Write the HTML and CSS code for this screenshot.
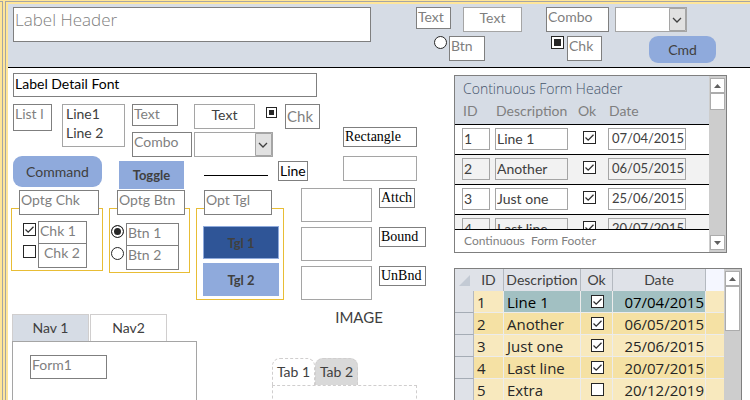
FILE: index.html
```html
<!DOCTYPE html>
<html lang="en">
<head>
	<meta charset="utf-8">
	<title>Form theme</title>
	<link rel="stylesheet" href="styles.css">
</head>
<body>
	<div class="pane"></div>
	<div class="window">
		<header class="head">
			<h1 class="box title">Label Header</h1>
			<div class="head-controls">
				<div class="row">
					<label class="box short w35" for="h-text">Text</label>
					<input class="field h-text" id="h-text" type="text" value="Text">
					<label class="box h-combo" for="h-combo">Combo</label>
					<select class="field combo h-select" id="h-combo"><option></option></select>
				</div>
				<div class="row second">
					<input class="radio" type="radio" id="h-btn">
					<label class="box w36" for="h-btn">Btn</label>
					<input class="check partial h-check" type="checkbox" id="h-chk">
					<label class="box w35" for="h-chk">Chk</label>
					<button class="btn h-cmd">Cmd</button>
				</div>
			</div>
		</header>
		<main class="main">
			<section class="detail">
				<h2 class="box detail-title">Label Detail Font</h2>
				<div class="row">
					<div class="left">
						<div class="row top">
							<label class="box list-label" for="d-list">List l</label>
							<select class="field list" id="d-list" size="2"><option>Line1</option><option>Line 2</option></select>
							<div class="pairs">
								<div class="row pair">
									<label class="box short w46" for="d-text">Text</label>
									<input class="field d-text" id="d-text" type="text" value="Text">
									<input class="check small partial d-check" type="checkbox" id="d-chk">
									<label class="box big w35" for="d-chk">Chk</label>
								</div>
								<div class="row pair2">
									<label class="box w60" for="d-combo">Combo</label>
									<select class="field combo d-select" id="d-combo"><option></option></select>
								</div>
							</div>
						</div>
						<div class="row commands">
							<button class="btn command">Command</button>
							<button class="toggle main-toggle">Toggle</button>
							<hr class="line">
							<span class="box line-label">Line</span>
						</div>
					</div>
					<div class="rect">
						<span class="box serif">Rectangle</span>
						<div class="frame"></div>
					</div>
				</div>
				<div class="row groups">
					<fieldset class="group g-chk">
						<legend class="box w80">Optg Chk</legend>
						<div class="row opt"><input class="check" type="checkbox" id="c1" checked><label class="box w49" for="c1">Chk 1</label></div>
						<div class="row opt"><input class="check" type="checkbox" id="c2"><label class="box w49 indent" for="c2">Chk 2</label></div>
					</fieldset>
					<fieldset class="group g-btn">
						<legend class="box w68">Optg Btn</legend>
						<div class="row opt"><input class="radio" type="radio" name="btn" id="b1" checked><label class="box w53" for="b1">Btn 1</label></div>
						<div class="row opt"><input class="radio" type="radio" name="btn" id="b2"><label class="box w53" for="b2">Btn 2</label></div>
					</fieldset>
					<fieldset class="group g-tgl">
						<legend class="box w68">Opt Tgl</legend>
						<button class="toggle on">Tgl 1</button>
						<button class="toggle">Tgl 2</button>
					</fieldset>
					<div class="frames">
						<div class="row"><div class="frame tall"></div><span class="box serif w36">Attch</span></div>
						<div class="row"><div class="frame tall"></div><span class="box serif w47">Bound</span></div>
						<div class="row"><div class="frame tall"></div><span class="box serif w47">UnBnd</span></div>
					</div>
				</div>
				<div class="row bottom">
					<div class="nav">
						<nav class="row nav-tabs">
							<a href="#nav1">Nav 1</a>
							<a href="#nav2" class="active">Nav2</a>
						</nav>
						<div class="nav-page"><span class="box form1">Form1</span></div>
					</div>
					<div class="tabs">
						<p class="image">IMAGE</p>
						<div class="row">
							<button class="tab active">Tab 1</button>
							<button class="tab">Tab 2</button>
						</div>
						<div class="tab-page"></div>
					</div>
				</div>
			</section>
			<section class="side">
				<div class="subform">
					<div class="sub-body">
						<div class="sub-clip">
							<h3>Continuous Form Header</h3>
							<table class="sub-table">
								<thead><tr><th class="s-id">ID</th><th class="s-desc">Description</th><th class="s-ok">Ok</th><th>Date</th></tr></thead>
								<tbody>
									<tr><td><input class="field" aria-label="ID" value="1"></td><td><input class="field" aria-label="Description" value="Line 1"></td><td class="s-check"><input class="check" type="checkbox" aria-label="Ok" checked></td><td><input class="field date" aria-label="Date" value="07/04/2015"></td></tr>
									<tr><td><input class="field" aria-label="ID" value="2"></td><td><input class="field" aria-label="Description" value="Another"></td><td class="s-check"><input class="check" type="checkbox" aria-label="Ok" checked></td><td><input class="field date" aria-label="Date" value="06/05/2015"></td></tr>
									<tr><td><input class="field" aria-label="ID" value="3"></td><td><input class="field" aria-label="Description" value="Just one"></td><td class="s-check"><input class="check" type="checkbox" aria-label="Ok" checked></td><td><input class="field date" aria-label="Date" value="25/06/2015"></td></tr>
									<tr><td><input class="field" aria-label="ID" value="4"></td><td><input class="field" aria-label="Description" value="Last line"></td><td class="s-check"><input class="check" type="checkbox" aria-label="Ok" checked></td><td><input class="field date" aria-label="Date" value="20/07/2015"></td></tr>
								</tbody>
							</table>
						</div>
						<p class="sub-foot">Continuous &nbsp;Form Footer</p>
					</div>
					<div class="scroll">
						<button class="arrow" aria-label="Up"><svg width="7" height="4"><path d="M0 4L3.5 0L7 4Z"/></svg></button>
						<div class="thumb"></div>
						<button class="arrow down" aria-label="Down"><svg width="7" height="4"><path d="M0 0L3.5 4L7 0Z"/></svg></button>
					</div>
				</div>
				<div class="sheet">
					<table class="sheet-table">
						<thead><tr><th class="t-sel"><svg width="11" height="11"><path d="M11 0V11H0Z"/></svg></th><th class="t-id">ID</th><th class="t-desc">Description</th><th class="t-ok">Ok</th><th class="t-date">Date</th><th class="t-rest"></th></tr></thead>
						<tbody>
							<tr class="sel"><th></th><td>1</td><td>Line 1</td><td><input class="check" type="checkbox" aria-label="Ok" checked></td><td>07/04/2015</td><td></td></tr>
							<tr><th></th><td>2</td><td>Another</td><td><input class="check" type="checkbox" aria-label="Ok" checked></td><td>06/05/2015</td><td></td></tr>
							<tr><th></th><td>3</td><td>Just one</td><td><input class="check" type="checkbox" aria-label="Ok" checked></td><td>25/06/2015</td><td></td></tr>
							<tr><th></th><td>4</td><td>Last line</td><td><input class="check" type="checkbox" aria-label="Ok" checked></td><td>20/07/2015</td><td></td></tr>
							<tr><th></th><td>5</td><td>Extra</td><td><input class="check" type="checkbox" aria-label="Ok"></td><td>20/12/2019</td><td></td></tr>
						</tbody>
					</table>
					<div class="scroll">
						<button class="arrow" aria-label="Up"><svg width="7" height="4"><path d="M0 4L3.5 0L7 4Z"/></svg></button>
						<div class="thumb long"></div>
					</div>
				</div>
			</section>
		</main>
	</div>
</body>
</html>
```
FILE: styles.css
```css
*{
	margin: 0;
	padding: 0;
	box-sizing: border-box;
}
body{
	display: flex;
	height: 100vh;
	overflow: hidden;
	background: #ffe699;
	font-family: Lato, "Open Sans", sans-serif;
	font-size: 14px;
	line-height: 18px;
	color: #404040;
}
input,select,button{
	font: inherit;
	color: inherit;
	appearance: none;
	border-radius: 0;
}
.pane{
	width: 3px;
	margin-top: 1px;
	border-top: 1px solid #a5a5a5;
	border-right: 1px solid #a5a5a5;
}
.window{
	display: flex;
	flex-direction: column;
	flex: 1;
	margin: 1px 0 0 2px;
	padding: 2px 0 0 2px;
	border-top: 1px solid #a5a5a5;
	border-left: 1px solid #a5a5a5;
}
.row{
	display: flex;
	align-items: flex-start;
}

/* boxes and fields */
.box{
	flex: none;
	display: block;
	height: 25px;
	padding: 0 1px;
	border: 1px solid #7f7f7f;
	background: #fff;
	color: #7f7f7f;
	font-weight: normal;
	white-space: nowrap;
	overflow: hidden;
}
.box.short{
	height: 22px;
}
.w35{ width: 35px; }
.w36{ width: 36px; }
.w46{ width: 46px; }
.w47{ width: 47px; }
.w49{ width: 49px; }
.w53{ width: 53px; }
.w60{ width: 60px; }
.w68{ width: 68px; }
.w80{ width: 80px; }
.box.big{
	font-size: 15px;
	line-height: 22px;
}
.box.indent{
	padding-left: 5px;
}
.box.serif{
	height: 20px;
	font-family: "Liberation Serif", serif;
	font-size: 14px;
	color: #000;
}
.field{
	height: 25px;
	border: 1px solid #a5a5a5;
	background: #fff;
	outline: none;
}
.combo{
	background: #fff url("data:image/svg+xml,%3Csvg xmlns='http://www.w3.org/2000/svg' width='17' height='23'%3E%3Cpath d='M.5 .5h16v22H.5z' fill='%23e1e1e1' stroke='%23a5a5a5'/%3E%3Cpath d='M4 10l4 4 4-4' fill='none' stroke='%23404040' stroke-width='1.3'/%3E%3C/svg%3E") right center no-repeat;
}
.check,.radio{
	flex: none;
	display: block;
	width: 13px;
	height: 13px;
	border: 1px solid #262626;
	background: #fff;
}
.check:checked{
	background: #fff url("data:image/svg+xml,%3Csvg xmlns='http://www.w3.org/2000/svg' width='11' height='11'%3E%3Cpath d='M1.5 5.5L4.2 8.2L9.5 2.8' fill='none' stroke='%23303030' stroke-width='1.3'/%3E%3C/svg%3E") center no-repeat;
}
.radio{
	border-radius: 50%;
}
.radio:checked,.partial{
	background: #262626;
	box-shadow: inset 0 0 0 2px #fff;
}
.small{
	width: 11px;
	height: 11px;
}
.btn{
	border: 0;
	border-radius: 9px;
	background: #8faadc;
}
.toggle{
	border: 1px solid #8faadc;
	background: #8faadc;
	font-size: 13px;
	font-weight: bold;
}
.toggle.on{
	background: #2f5597;
}

/* header */
.head{
	display: flex;
	flex: none;
	height: 64px;
	padding: 3px 5px;
	border-bottom: 1px solid #000;
	background: #d6dce5;
}
.title{
	flex: 0 1 358px;
	height: 35px;
	padding: 1px;
	font-family: "Open Sans", sans-serif;
	font-size: 17px;
	font-weight: 300;
	line-height: 22px;
}
.head-controls{
	margin-left: 45px;
}
.h-text{
	width: 59px;
	margin: 0 24px 0 12px;
	padding-bottom: 4px;
	text-align: center;
	color: #7f7f7f;
}
.h-combo{
	width: 63px;
}
.h-select{
	width: 72px;
	margin-left: 6px;
}
.second{
	margin-top: 4px;
	padding-left: 18px;
}
.second .radio{
	margin-right: 2px;
}
.h-check{
	margin: 0 3px 0 66px;
}
.h-cmd{
	width: 67px;
	height: 27px;
	margin-left: 47px;
}

/* detail */
.main{
	display: flex;
	flex: 1;
	min-height: 0;
	overflow: hidden;
	background: #fff;
}
.detail{
	flex: none;
	width: 446px;
	padding: 5px 0 0 3px;
}
.detail-title{
	width: 304px;
	height: 24px;
	margin: 0 0 7px 2px;
	font-size: 14px;
	line-height: 20px;
	color: #000;
}
.left{
	width: 332px;
	padding-left: 2px;
}
.top{
	height: 52px;
}
.list-label{
	width: 39px;
	height: 27px;
}
.list{
	width: 63px;
	height: 43px;
	margin: 0 7px 0 10px;
	overflow: hidden;
}
.list option{
	min-height: 19px;
	padding: 0 3px;
	line-height: 19px;
}
.pair{
	margin-bottom: 3px;
}
.d-text{
	width: 61px;
	margin: 0 11px 0 16px;
	padding-bottom: 4px;
	text-align: center;
}
.d-check{
	margin: 3px 8px 0 0;
}
.d-select{
	width: 79px;
	margin-left: 2px;
}
.command{
	width: 89px;
	height: 31px;
}
.main-toggle{
	width: 65px;
	height: 28px;
	margin: 5px 20px 0 17px;
}
.line{
	width: 64px;
	margin-top: 19px;
	border: 0;
	border-top: 1px solid #000;
}
.line-label{
	height: 20px;
	margin: 5px 0 0 10px;
	color: #000;
}
.commands{
	height: 32px;
}
.rect{
	width: 74px;
	padding-top: 23px;
}
.frame{
	height: 25px;
	margin-top: 9px;
	border: 1px solid #a5a5a5;
}
.groups{
	height: 117px;
}
.group{
	min-width: 0;
	margin-right: 6px;
	border: 1px solid #e8bd35;
}
.group legend{
	float: left;
	margin: -19px 0 0 7px;
}
.opt{
	clear: both;
	padding-left: 11px;
	margin-top: -3px;
}
.opt .box{
	margin-left: 2px;
}
.opt input{
	margin-top: 2px;
}
.g-chk,.g-btn,.g-tgl{
	margin-top: 20px;
}
.g-chk{
	width: 92px;
	height: 63px;
}
.g-chk legend + .opt{
	margin-top: 0;
	padding-top: 6px;
}
.g-btn legend + .opt{
	margin-top: 0;
	padding-top: 8px;
}
.g-btn{
	width: 81px;
	height: 65px;
}
.g-btn .opt{
	padding-left: 1px;
}
.g-tgl{
	width: 88px;
	height: 92px;
	margin-right: 17px;
}
.g-tgl .toggle{
	clear: both;
	display: block;
	width: 76px;
	height: 33px;
	margin: 0 0 4px 6px;
}
.g-tgl legend{
	margin-bottom: 11px;
}
.frames .row{
	height: 39px;
}
.tall{
	width: 71px;
	height: 34px;
	margin: 0 7px 0 0;
}

/* navigation and tabs */
.nav{
	width: 185px;
	margin: 9px 75px 0 1px;
}
.nav-tabs{
	gap: 1px;
}
.nav-tabs a{
	width: 77px;
	height: 27px;
	border: 1px solid #d0cece;
	border-bottom: 0;
	background: #d6dce5;
	color: inherit;
	line-height: 26px;
	text-align: center;
	text-decoration: none;
}
.nav-tabs .active{
	background: #fff;
}
.nav-page{
	height: 80px;
	padding: 13px 17px;
	border: 1px solid #a5a5a5;
}
.form1{
	width: 77px;
	height: 24px;
}
.tabs{
	width: 145px;
}
.image{
	height: 53px;
	padding: 2px 0 0 29px;
	text-align: center;
	font-size: 15px;
	line-height: 20px;
}
.tab{
	width: 43px;
	height: 27px;
	border: 1px dashed #d0cece;
	border-bottom: 0;
	border-radius: 8px 8px 0 0;
	background: #d9d9d9;
}
.tab.active{
	background: #fff;
}
.tab-page{
	height: 40px;
	border: 1px dashed #d0cece;
}

/* continuous form */
.side{
	flex: 1;
	padding: 7px 8px 0 0;
}
.subform{
	display: flex;
	height: 178px;
	margin-right: 15px;
	border: 1px solid #7f7f7f;
}
.sub-body{
	flex: 1;
}
.sub-clip{
	height: 154px;
	overflow: hidden;
	border-bottom: 1px solid #000;
}
.subform h3{
	height: 23px;
	padding: 3px 8px 0;
	background: #d6dce5;
	color: #44546a;
	font-family: "Open Sans", sans-serif;
	font-size: 14px;
	font-weight: 300;
	line-height: 20px;
}
table{
	width: 100%;
	table-layout: fixed;
	border-collapse: separate;
	border-spacing: 0;
}
.sub-table th{
	height: 26px;
	padding: 0 0 2px 1px;
	border-bottom: 1px solid #000;
	background: #d6dce5;
	color: #7f7f7f;
	font-weight: normal;
	text-align: left;
}
.sub-table .s-id{
	width: 40px;
	padding-left: 8px;
}
.s-desc{ width: 82px; }
.s-ok{ width: 31px; }
.sub-table td{
	height: 30px;
	padding: 0 9px 2px 0;
	border-bottom: 1px solid #000;
}
.sub-table td:first-child{
	padding: 0 5px 2px 7px;
}
.sub-table tr:nth-child(even) td,.sub-table tr:nth-child(even) .field{
	background: #f2f2f2;
}
.sub-table td.s-check{
	padding: 0 0 5px 6px;
}
.sub-table .field{
	display: block;
	width: 100%;
	height: 22px;
	padding: 0 1px 1px;
}
.sub-table .date{
	width: 78px;
	text-align: right;
	font-size: 13px;
}
.sub-foot{
	padding: 2px 9px;
	color: #7f7f7f;
	font-size: 12px;
}
.scroll{
	display: flex;
	flex-direction: column;
	flex: none;
	width: 17px;
	padding: 2px 1px;
	background: #cdcdcd;
}
.arrow,.thumb{
	height: 15px;
	border: 1px solid #acacac;
	background: #fff;
}
.arrow{
	display: flex;
	align-items: center;
	justify-content: center;
	fill: #606060;
}
.thumb{
	height: 17px;
}
.long{
	height: 45px;
}
.down{
	margin-top: auto;
}

/* datasheet */
.sheet{
	display: flex;
	margin-top: 15px;
	border: 1px solid #7f7f7f;
	font-family: "Open Sans", sans-serif;
	font-size: 15px;
	color: #262626;
}
.sheet-table th{
	height: 22px;
	border-right: 1px solid #b4b9c0;
	background: #dfe2e8;
	color: #404040;
	font-family: Lato, sans-serif;
	font-size: 14px;
	font-weight: normal;
}
.sheet-table thead .t-sel{
	width: 19px;
	border-right: 0;
	fill: #c3cad4;
}
.t-id{ width: 30px; }
.t-desc{ width: 77px; }
.t-ok{ width: 32px; }
.t-date{ width: 93px; }
.sheet-table svg{
	display: block;
	margin-left: 4px;
}
.sheet-table .t-rest{
	border: 0;
	background: #f5f7ff;
}
.sheet-table tbody th{
	border-bottom: 1px solid #a5acb5;
}
.sheet-table td{
	height: 22px;
	padding: 0 1px 0 3px;
	border-right: 1px solid #ececec;
	border-bottom: 1px solid #ececec;
	background: #f8e9be;
}
.sheet-table tr:nth-child(even) td{
	background: #f5e1a4;
}
.sheet-table td:nth-child(5){
	text-align: right;
}
.sheet-table td:last-child{
	border-right: 0;
}
.sheet-table .check{
	margin: 0 auto;
}
.sheet-table .sel td:nth-child(n+3):nth-child(-n+5){
	background: #a2c0c2;
	color: #000;
}
```
